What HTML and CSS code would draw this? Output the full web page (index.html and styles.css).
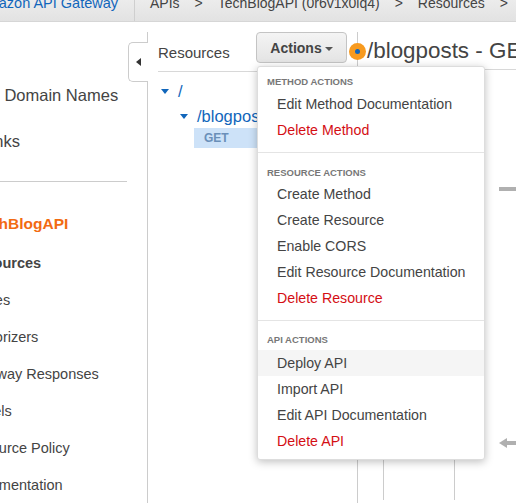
FILE: index.html
```html
<!DOCTYPE html>
<html lang="en">

<head>
  <meta charset="UTF-8">
  <meta name="viewport" content="width=device-width, initial-scale=1.0">
  <title>API Gateway</title>

  <link rel="stylesheet" href="styles.css">
</head>

<body>
  <header class="topbar">
    <a class="topbar-service">Amazon API Gateway</a>
    <nav class="crumbs">
      <span>APIs</span>
      <span>&gt;</span>
      <span>TechBlogAPI (0r6v1x0lq4)</span>
      <span>&gt;</span>
      <span>Resources</span>
      <span>&gt;</span>
    </nav>
  </header>

  <div class="layout">
    <aside class="sidebar">
      <ul class="side-top">
        <li>Custom Domain Names</li>
        <li>VPC Links</li>
      </ul>
      <hr class="side-rule">
      <div class="side-api">TechBlogAPI</div>
      <ul class="side-list">
        <li class="side-current">Resources</li>
        <li>Stages</li>
        <li>Authorizers</li>
        <li>Gateway Responses</li>
        <li>Models</li>
        <li>Resource Policy</li>
        <li>Documentation</li>
      </ul>
      <div class="collapse-tab"><span class="collapse-arrow"></span></div>
    </aside>

    <section class="resources">
      <div class="resources-head">
        <h2>Resources</h2>
        <div class="actions-wrap">
          <button class="actions-btn">Actions<span class="caret"></span></button>
        </div>
      </div>
      <ul class="tree">
        <li class="tree-root"><span class="tree-arrow"></span><a>/</a></li>
        <li class="tree-child"><span class="tree-arrow"></span><a>/blogposts</a></li>
        <li class="tree-method">GET</li>
      </ul>
    </section>

    <section class="detail">
      <h1>/blogposts - GET - Method Execution</h1>
      <div class="diagram">
        <div class="diagram-col"></div>
        <div class="diagram-col diagram-col-wide"></div>
        <div class="diagram-links">
          <span class="link-dash"></span>
          <span class="link-arrow"></span>
        </div>
      </div>
    </section>
  </div>

  <span class="hotspot"><span class="hotspot-core"></span></span>

  <div class="menu">
    <div class="menu-group">
      <h3>METHOD ACTIONS</h3>
      <a>Edit Method Documentation</a>
      <a class="danger">Delete Method</a>
    </div>
    <div class="menu-group">
      <h3>RESOURCE ACTIONS</h3>
      <a>Create Method</a>
      <a>Create Resource</a>
      <a>Enable CORS</a>
      <a>Edit Resource Documentation</a>
      <a class="danger">Delete Resource</a>
    </div>
    <div class="menu-group">
      <h3>API ACTIONS</h3>
      <a class="hover">Deploy API</a>
      <a>Import API</a>
      <a>Edit API Documentation</a>
      <a class="danger">Delete API</a>
    </div>
  </div>
</body>

</html>
```

FILE: styles.css
```css
* {
  box-sizing: border-box;
}

html,
body {
  height: 100%;
}

body {
  color: #444;
  font-family: "Liberation Sans", Arial, sans-serif;
  margin: 0;
  overflow: hidden;
  position: relative;
}

ul {
  list-style: none;
  margin: 0;
  padding: 0;
}

/* top bar, text is cut off by the top of the window */
.topbar {
  background: linear-gradient(#ececec, #e2e2e2);
  border-bottom: 1px solid #d6d6d6;
  display: flex;
  font-size: 14px;
  height: 22px;
  line-height: 16px;
  overflow: hidden;
  white-space: nowrap;
}

.topbar-service {
  border-right: 1px solid #cfcfcf;
  color: #1166bb;
  flex: none;
  font-size: 14.5px;
  margin-left: -23px;
  padding-right: 16px;
  width: 158px;
}

.topbar-service,
.crumbs {
  height: 32px;
  margin-top: -5px;
}

.crumbs {
  column-gap: 15px;
  display: flex;
  padding-left: 15px;
}

.layout {
  display: flex;
  height: 481px;
}

.sidebar {
  border-right: 1px solid #ccc;
  flex: none;
  margin-top: 10px;
  position: relative;
  width: 148px;
}

.side-top {
  font-size: 16.5px;
  margin-left: -57px;
  padding-top: 52px;
}

.side-top li {
  height: 46px;
  line-height: 22px;
  white-space: nowrap;
}

.side-rule {
  border: 0;
  border-top: 1px solid #ccc;
  margin: 5px 20px 0 0;
}

.side-api {
  color: #f26b12;
  font-size: 15.5px;
  font-weight: bold;
  line-height: 20px;
  margin-left: -27px;
  margin-top: 32px;
  white-space: nowrap;
}

.side-list {
  font-size: 14.5px;
  margin-left: -35px;
  padding-top: 19px;
}

.side-list li {
  height: 37px;
  line-height: 20px;
  white-space: nowrap;
}

.side-list .side-current {
  font-weight: bold;
  padding-left: 2px;
}

.collapse-tab {
  align-items: center;
  background: #fff;
  border: 1px solid #ccc;
  border-radius: 5px 0 0 5px;
  border-right: 0;
  display: flex;
  height: 40px;
  justify-content: center;
  left: -20px;
  margin-left: 148px;
  position: absolute;
  top: 10px;
  width: 20px;
}

.collapse-arrow {
  border-bottom: 4.5px solid transparent;
  border-right: 5px solid #333;
  border-top: 4.5px solid transparent;
}

.resources {
  border-right: 1px solid #ccc;
  flex: none;
  margin-top: 10px;
  padding-left: 10px;
  width: 210px;
}

.resources-head {
  align-items: center;
  border-bottom: 1px solid #d8d8d8;
  display: flex;
  height: 40px;
  position: relative;
}

.resources-head h2 {
  font-size: 15px;
  font-weight: normal;
  margin: 0;
  padding-top: 2px;
}

.actions-wrap {
  left: 98px;
  position: absolute;
  top: 0;
}

.actions-btn {
  background: linear-gradient(#f4f4f4, #e4e4e4);
  border: 1px solid #c4c4c4;
  border-radius: 4px;
  color: #444;
  font-family: inherit;
  font-size: 14px;
  font-weight: bold;
  height: 31px;
  padding: 0;
  width: 91px;
}

.caret {
  border-left: 4px solid transparent;
  border-right: 4px solid transparent;
  border-top: 4px solid #555;
  display: inline-block;
  margin-left: 3px;
  vertical-align: 2px;
}

.tree {
  color: #1166bb;
  font-size: 16.5px;
}

.tree li {
  line-height: 24px;
}

.tree-arrow {
  border-left: 4.5px solid transparent;
  border-right: 4.5px solid transparent;
  border-top: 5px solid #1166bb;
  display: inline-block;
  margin-right: 9px;
  vertical-align: 3px;
}

.tree-root {
  margin-left: 3px;
  margin-top: 7px;
}

.tree-child {
  margin-left: 22px;
  margin-top: 1px;
  white-space: nowrap;
}

.tree .tree-method {
  background: #cde2f8;
  color: #6a8fb8;
  font-size: 12px;
  font-weight: bold;
  height: 20px;
  line-height: 20px;
  margin-left: 36px;
  padding-left: 10px;
}

.detail {
  flex: 1;
  margin-top: 10px;
  min-width: 0;
  overflow: hidden;
}

.detail h1 {
  border-bottom: 1px solid #d8d8d8;
  font-size: 22.4px;
  font-weight: normal;
  height: 38px;
  line-height: 38px;
  margin: 0;
  padding-left: 9px;
  white-space: nowrap;
}

.diagram {
  display: flex;
  height: 430px;
}

.diagram-col {
  border-right: 1px solid #ccc;
  flex: none;
  width: 26px;
}

.diagram-col-wide {
  width: 71px;
}

.diagram-links {
  flex: 1;
  padding-left: 44px;
}

.link-dash {
  background: #b0b0b0;
  display: block;
  height: 4px;
  margin-top: 117px;
  width: 20px;
}

.link-arrow {
  border-bottom: 5px solid transparent;
  border-right: 8px solid #b0b0b0;
  border-top: 5px solid transparent;
  display: block;
  margin-top: 247px;
  position: relative;
  width: 0;
}

.link-arrow::after {
  background: #b0b0b0;
  content: "";
  height: 4px;
  left: 8px;
  position: absolute;
  top: -2px;
  width: 14px;
}

/* over the panes */
.hotspot {
  align-items: center;
  background: #f79a1f;
  border-radius: 50%;
  display: flex;
  height: 17px;
  justify-content: center;
  left: 349px;
  position: absolute;
  top: 43px;
  width: 17px;
}

.hotspot-core {
  background: #1166bb;
  border-radius: 50%;
  height: 5px;
  width: 5px;
}

.menu {
  background: #fff;
  border: 1px solid #ddd;
  border-radius: 3px;
  box-shadow: 0 2px 9px rgba(0, 0, 0, 0.25);
  left: 257px;
  position: absolute;
  top: 66px;
  width: 228px;
}

.menu-group {
  border-bottom: 1px solid #e4e4e4;
  padding: 8px 0 9px;
}

.menu-group h3 {
  color: #777;
  font-size: 9.5px;
  font-weight: bold;
  line-height: 14px;
  margin: 0 0 2px;
  padding-left: 9px;
}

.menu-group + .menu-group {
  padding-top: 13px;
}

.menu-group + .menu-group h3 {
  margin-bottom: 1px;
}

.menu .menu-group:last-child {
  border-bottom: 0;
  padding-bottom: 5px;
  padding-top: 12px;
}

.menu .menu-group:last-child h3 {
  margin-bottom: 3px;
}

.menu a {
  display: block;
  font-size: 14.2px;
  height: 26px;
  line-height: 26px;
  padding-left: 19px;
}

.menu a.danger {
  color: #d40e14;
}

.menu a.hover {
  background: #f5f5f5;
}
```
